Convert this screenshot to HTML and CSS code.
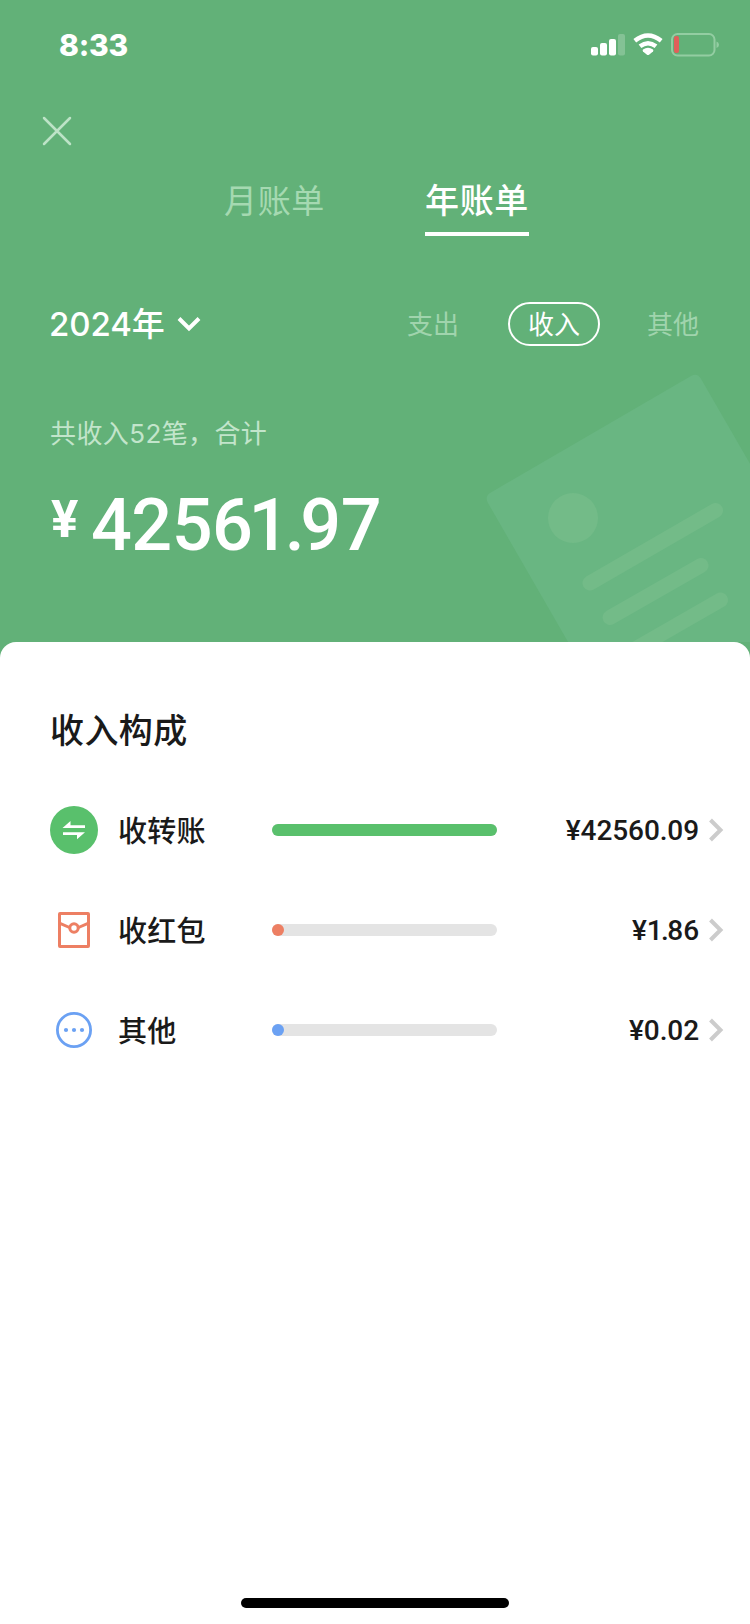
FILE: index.html
```html
<!DOCTYPE html>
<html lang="zh-CN">
<head>
<meta charset="utf-8">
<title>年账单</title>
<link rel="stylesheet" href="styles.css">
</head>
<body>
<div class="screen">
  <header class="hero">
    <svg class="hero-art" width="280" height="282" viewBox="470 360 280 282" fill="none">
      <path d="M490 493 L691 376 Q697 372.500 700.500 378 L860 654 L590 680 L488 503 Q484.500 496.500 490 493Z" fill="#69b682"/>
      <g stroke="#73bb88" stroke-width="15" stroke-linecap="round">
        <path d="M590 583L715.500 510.500"/>
        <path d="M610 617.500L701 565.500"/>
        <path d="M630 652L720.500 600"/>
      </g>
      <circle cx="573" cy="518" r="25" fill="#73bb88"/>
    </svg>
    <div class="status">
      <span class="clock">8:33</span>
      <div class="status-icons">
        <svg width="130" height="26" viewBox="590 32 130 26" fill="none">
          <g fill="#fff">
            <rect x="591" y="47" width="7" height="8.500" rx="2"/>
            <rect x="600" y="43" width="7" height="12.500" rx="2"/>
            <rect x="609" y="39" width="7" height="16.500" rx="2"/>
            <rect x="618" y="34" width="7" height="21.500" rx="2" opacity=".22"/>
            <path d="M643 49.500Q648 45.800 653 49.500Q653.800 50.500 653 51.400L649.300 54.600Q648 55.600 646.700 54.600L643 51.400Q642.200 50.500 643 49.500Z"/>
          </g>
          <path d="M640 46.300Q648 40 656 46.300M634.800 40.800Q648 30.200 661.200 40.800" stroke="#fff" stroke-width="4.400"/>
          <rect x="672" y="34" width="42.500" height="21.500" rx="5.500" stroke="#93cda2" stroke-width="2"/>
          <rect x="674" y="36" width="5" height="17" rx="2" fill="#e0605a"/>
          <path d="M716.500 41.500Q719 42.500 719 44.800Q719 47 716.500 48Z" fill="#93cda2"/>
        </svg>
      </div>
    </div>
    <svg class="close" width="30" height="30" viewBox="0 0 30 30" fill="none" stroke="#bde3c7" stroke-width="2.500" stroke-linecap="round"><path d="M2 2L28 28M28 2L2 28"/></svg>
    <nav class="tabs">
      <span class="tab">月账单</span>
      <span class="tab tab-active">年账单</span>
    </nav>
    <div class="filters">
      <div class="year">2024年<svg width="24" height="16" viewBox="0 0 24 16" fill="none" stroke="#fff" stroke-width="4"><path d="M2 2.500L12 12.500L22 2.500"/></svg></div>
      <div class="kinds">
        <span class="kind">支出</span>
        <span class="kind kind-active">收入</span>
        <span class="kind">其他</span>
      </div>
    </div>
    <div class="summary">共收入52笔，合计</div>
    <div class="total"><span class="yen">¥</span><span class="sum">425<span class="tight">61.</span>97</span></div>
  </header>
  <main class="sheet">
    <h2 class="title">收入构成</h2>
    <div class="row">
      <svg class="icon" width="48" height="48" viewBox="0 0 48 48"><circle cx="24" cy="24" r="24" fill="#59c06c"/><path d="M12.500 22L20.500 15V19.200H35V22ZM35 26.300L27 33.300V29.100H13V26.300Z" fill="#fff"/></svg>
      <span class="label">收转账</span>
      <div class="bar"><div class="fill green" style="width:100%"></div></div>
      <span class="amount">¥42560.09</span>
      <svg class="more" width="16" height="24" viewBox="0 0 16 24"><path d="M2.500 2L12.500 12L2.500 22"/></svg>
    </div>
    <div class="row">
      <svg class="icon" width="48" height="48" viewBox="0 0 48 48" fill="none" stroke="#ed7f63" stroke-width="3"><rect x="9.500" y="7.500" width="29" height="33" rx=".5"/><path d="M10 17.300L19.500 21.500M38 17.300L28.500 21.500"/><circle cx="24" cy="22" r="4.200"/></svg>
      <span class="label">收红包</span>
      <div class="bar"><div class="fill red" style="width:0.01%"></div></div>
      <span class="amount">¥<span class="one">1.</span>86</span>
      <svg class="more" width="16" height="24" viewBox="0 0 16 24"><path d="M2.500 2L12.500 12L2.500 22"/></svg>
    </div>
    <div class="row">
      <svg class="icon" width="48" height="48" viewBox="0 0 48 48"><circle cx="24" cy="24" r="16.600" fill="none" stroke="#6ba1f3" stroke-width="2.800"/><g fill="#6ba1f3"><circle cx="16" cy="24" r="2.100"/><circle cx="24" cy="24" r="2.100"/><circle cx="32" cy="24" r="2.100"/></g></svg>
      <span class="label">其他</span>
      <div class="bar"><div class="fill blue" style="width:0.01%"></div></div>
      <span class="amount">¥0.02</span>
      <svg class="more" width="16" height="24" viewBox="0 0 16 24"><path d="M2.500 2L12.500 12L2.500 22"/></svg>
    </div>
    <div class="home"></div>
  </main>
</div>
</body>
</html>
```
FILE: styles.css
```css
* { box-sizing: border-box; }
body { margin: 0; background: #62b178; font-family: Inter, "Noto Sans CJK SC", sans-serif; }
svg { display: block; flex: none; }
.screen { width: 750px; height: 1624px; display: flex; flex-direction: column; overflow: hidden; }
.hero { position: relative; height: 642px; color: #fff; background: #62b178; }
.hero-art { position: absolute; right: 0; bottom: 0; }
.status { display: flex; justify-content: space-between; height: 90px; padding: 25px 30px 0 59px; }
.clock { font-size: 30px; line-height: 40px; font-weight: 800; letter-spacing: -.2px; }
.status-icons { padding-top: 7px; }
.close { margin: 26px 0 0 42px; }
.tabs { display: flex; gap: 100px; margin: 30px 0 0 224px; }
.tab { height: 60px; padding-top: 4px; font-size: 33px; line-height: 42px; letter-spacing: .67px; color: #a5d9b1; border-bottom: 4px solid transparent; white-space: nowrap; }
.tab-active { font-size: 34px; color: #fff; font-weight: 500; border-color: #fff; }
.filters { display: flex; justify-content: space-between; align-items: center; height: 44px; margin: 66px 50px 0 49px; }
.year { display: flex; align-items: center; gap: 12px; font-size: 33px; line-height: 44px; font-weight: 500; letter-spacing: -.1px; white-space: nowrap; }
.kinds { display: flex; gap: 29px; }
.kind { width: 92px; height: 44px; font-size: 26px; line-height: 42px; text-align: center; color: #a0d4ad; border: 2px solid transparent; border-radius: 22px; white-space: nowrap; }
.kind:last-child { width: 56px; margin-left: 16px; margin-right: -1px; }
.kind-active { color: #fff; border-color: #fff; }
.summary { margin: 68px 0 0 50px; font-size: 26px; line-height: 40px; letter-spacing: .4px; color: #c2e5cb; white-space: nowrap; }
.total { display: flex; align-items: flex-start; margin: 22px 0 0 51px; font-family: Roboto, sans-serif; font-weight: 500; white-space: nowrap; }
.yen { width: 40px; font-size: 51px; line-height: 60px; padding-top: 14px; font-weight: 700; }
.sum { font-size: 72px; line-height: 100px; letter-spacing: -.6px; }
.tight { letter-spacing: -4.500px; }
.sheet { position: relative; flex: 1; background: #fff; border-radius: 16px 16px 0 0; padding: 64px 26px 0 50px; color: #1a1a1a; }
.title { margin: 0 0 24px; font-size: 34px; line-height: 50px; font-weight: 500; letter-spacing: .4px; }
.row { display: flex; align-items: center; height: 100px; }
.icon { width: 48px; }
.label { width: 154px; padding: 3px 0 0 20px; font-size: 29px; line-height: 40px; font-weight: 500; letter-spacing: .3px; white-space: nowrap; }
.bar { width: 225px; height: 12px; margin-left: 20px; border-radius: 6px; background: #e4e4e4; }
.fill { height: 12px; min-width: 12px; border-radius: 6px; }
.green { background: #59c06c; }
.red { background: #ed7f63; }
.blue { background: #6ba1f3; }
.amount { flex: 1; padding-top: 2px; text-align: right; font-family: Roboto, sans-serif; font-size: 28px; line-height: 40px; font-weight: 500; letter-spacing: -.1px; }
.one { letter-spacing: -1.500px; }
.more { margin-left: 9px; fill: none; stroke: #ccc; stroke-width: 4; }
.home { position: absolute; left: 241px; bottom: 16px; width: 268px; height: 10px; border-radius: 5px; background: #000; }
```
